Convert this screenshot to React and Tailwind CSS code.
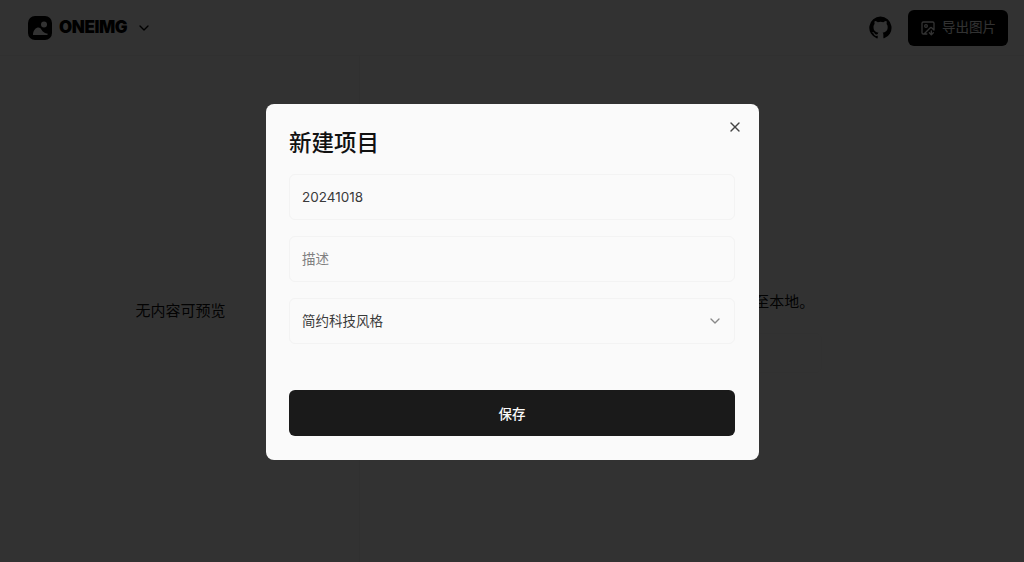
import { X, ChevronDown, ImageDown } from "lucide-react";

const cjk = "font-['Inter','Noto_Sans_CJK_SC',sans-serif]";

function Logo() {
  return (
    <svg width="24" height="24" viewBox="0 0 24 24">
      <rect x="0" y="0" width="24" height="24" rx="7" fill="black" />
      <circle cx="16" cy="8.5" r="3" fill="#fafafa" />
      <path d="M5 19 C5 14 8 11.5 10.5 11.5 C13 11.5 13.5 14.5 15.5 16 C17 17 18.5 17.5 19.5 17.5 L19.5 19 Z" fill="#fafafa" />
    </svg>
  );
}

function GithubMark() {
  return (
    <svg width="23" height="23" viewBox="0 0 24 24" fill="black">
      <path d="M12 .6a11.7 11.7 0 0 0-3.7 22.8c.6.1.8-.3.8-.6v-2.1c-3.3.7-4-1.6-4-1.6-.5-1.4-1.3-1.7-1.3-1.7-1.1-.7.1-.7.1-.7 1.2.1 1.8 1.2 1.8 1.2 1.1 1.8 2.8 1.3 3.5 1 .1-.8.4-1.3.8-1.6-2.6-.3-5.3-1.3-5.3-5.8 0-1.3.5-2.3 1.2-3.1-.1-.3-.5-1.5.1-3.1 0 0 1-.3 3.2 1.2a11 11 0 0 1 5.8 0c2.2-1.5 3.2-1.2 3.2-1.2.6 1.6.2 2.8.1 3.1.8.8 1.2 1.9 1.2 3.1 0 4.5-2.7 5.5-5.3 5.8.4.4.8 1.1.8 2.2v3.2c0 .3.2.7.8.6A11.7 11.7 0 0 0 12 .6Z" />
    </svg>
  );
}

function Field({ children }) {
  return (
    <div className="flex h-[46px] items-center justify-between rounded-md border border-[#f3f3f3] pl-3 pr-[11px] text-[13.5px] text-[#3a3a3a]">
      {children}
    </div>
  );
}

export default function App() {
  return (
    <div className={`relative flex h-[562px] w-[1024px] flex-col overflow-hidden bg-[#fafafa] ${cjk}`}>
      <header className="flex h-14 items-center justify-between border-b border-[#f0f0f0] pl-[28px] pr-[16px]">
        <div className="flex items-center">
          <Logo />
          <span className="ml-[7px] text-[17px] font-black tracking-tight text-black">ONEIMG</span>
          <ChevronDown className="ml-[9px] h-4 w-4 text-black" />
        </div>
        <div className="flex items-center gap-4">
          <GithubMark />
          <button className="flex h-9 w-[100px] items-center justify-center gap-1.5 rounded-md bg-black text-[13.5px] text-[#fafafa]">
            <ImageDown className="h-4 w-4" />
            导出图片
          </button>
        </div>
      </header>

      <main className="flex flex-1">
        <div className="flex w-[360px] items-center justify-center border-r border-[#f0f0f0] pl-[2px] pt-1 text-[15px] text-[#111]">
          无内容可预览
        </div>
        <div className="flex flex-1 flex-col items-center justify-center gap-5 pt-[46px] text-[15px] text-[#111]">
          <p>点击右上角导出图片,可保存至本地。</p>
          <div className="h-10 w-[260px] rounded-md border border-[#f5f5f5]" />
        </div>
      </main>

      <div className="absolute inset-0 flex items-center justify-center bg-black/80">
        <div className="relative ml-[1px] mt-[2px] flex h-[356px] w-[493px] flex-col rounded-lg bg-[#fafafa] pl-[23px] pr-6 pt-6">
          <button className="absolute right-4 top-[15px] text-[#444]">
            <X className="h-4 w-4" />
          </button>
          <h2 className="text-[22.5px] font-medium leading-[30px] text-[#111]">新建项目</h2>
          <div className="mt-[16px] flex flex-col gap-4">
            <Field>20241018</Field>
            <Field>
              <span className="text-[#808080]">描述</span>
            </Field>
            <Field>
              <span>简约科技风格</span>
              <ChevronDown className="h-4 w-4 text-[#888]" />
            </Field>
          </div>
          <button className="mt-[46px] h-[46px] rounded-md bg-[#1a1a1a] pt-[2px] text-[13.5px] font-medium text-[#fafafa]">
            保存
          </button>
        </div>
      </div>
    </div>
  );
}
